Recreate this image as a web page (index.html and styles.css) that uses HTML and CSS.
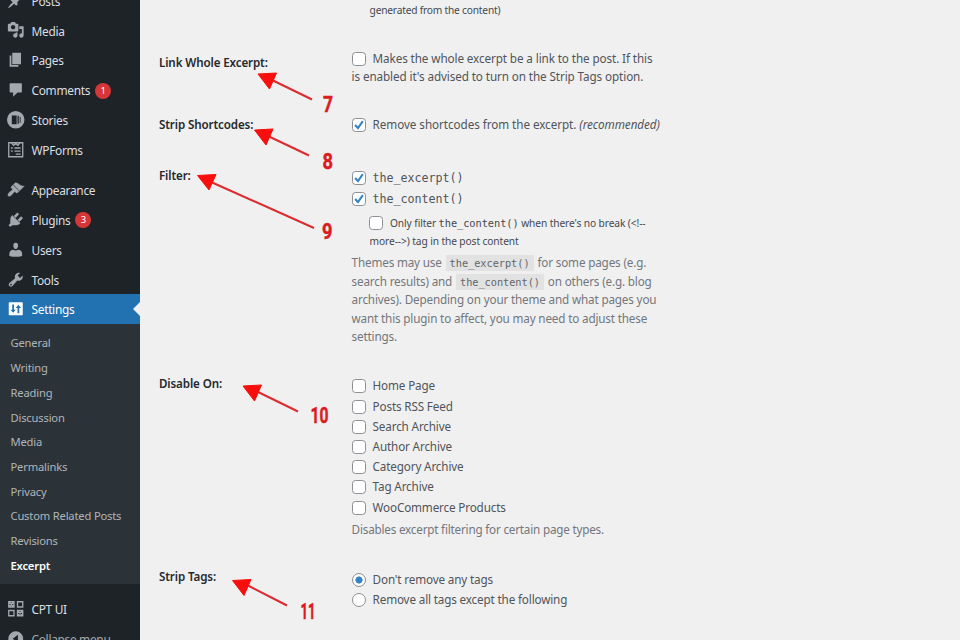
FILE: index.html
```html
<!DOCTYPE html>
<html lang="en">
<head>
<meta charset="utf-8">
<title>Excerpt Settings</title>
<link rel="stylesheet" href="styles.css">
</head>
<body>
<div class="admin">
  <nav class="sidebar">
    <a class="item"><svg viewBox="0 0 20 20"><path d="M10.44 3.02l1.82-1.82 6.36 6.35-1.83 1.82c-1.05-.68-2.48-.57-3.41.36l-.75.75c-.92.93-1.04 2.35-.35 3.41l-1.83 1.82-2.41-2.41-2.8 2.79c-.42.42-3.38 2.71-3.8 2.29s1.86-3.39 2.28-3.81l2.79-2.79L4.1 9.36l1.83-1.82c1.05.69 2.48.57 3.4-.36l.75-.75c.93-.92 1.05-2.35.36-3.41z"/></svg><span>Posts</span></a>
    <a class="item"><svg viewBox="0 0 20 20"><path fill-rule="evenodd" d="M13 11V4c0-.55-.45-1-1-1h-1.67L9 1H5L3.67 3H2c-.55 0-1 .45-1 1v7c0 .55.45 1 1 1h10c.55 0 1-.45 1-1zM7 4.500c1.380 0 2.500 1.120 2.500 2.500S8.380 9.500 7 9.500 4.500 8.380 4.500 7 5.620 4.500 7 4.500zM14 6h5v10.500c0 1.380-1.120 2.500-2.500 2.500S14 17.880 14 16.500s1.120-2.500 2.500-2.500c.17 0 .34.02.5.05V9h-3V6zm-4 8.050V13h2v3.500c0 1.380-1.120 2.500-2.500 2.500S7 17.880 7 16.500 8.120 14 9.500 14c.17 0 .34.02.5.05z"/></svg><span>Media</span></a>
    <a class="item"><svg viewBox="0 0 20 20"><path d="M6 15V2h10v13H6zm-1 1h8v2H3V5h2v11z"/></svg><span>Pages</span></a>
    <a class="item"><svg viewBox="0 0 20 20"><path d="M4 2.500h12a1 1 0 0 1 1 1V12a1 1 0 0 1-1 1h-4l-5 5v-5H4a1 1 0 0 1-1-1V3.500a1 1 0 0 1 1-1z"/></svg><span>Comments</span><b class="count">1</b></a>
    <a class="item"><svg viewBox="0 0 20 20"><path fill-rule="evenodd" d="M10 0a10 10 0 1 0 0 20 10 10 0 0 0 0-20zM5.500 5H11v10H5.500zM12 5.500h1.500v9H12zM14.500 6.500h1v7h-1z"/></svg><span>Stories</span></a>
    <a class="item"><svg viewBox="0 0 20 20"><path fill="none" stroke="currentColor" stroke-width="1.500" d="M2 2h16v16H2zM5.500 2.500l2 2.500L10 3l2.500 2 2-2.500M4.500 8h2M8.500 8h7M4.500 11.500h2M8.500 11.500h7M10 15h5.500"/></svg><span>WPForms</span></a>
    <div class="separator"></div>
    <a class="item"><svg viewBox="0 0 20 20"><path stroke="currentColor" stroke-width=".5" d="M14.480 11.060L7.410 3.990l1.500-1.500c.5-.56 2.300-.47 3.510.32 1.210.8 1.430 1.280 2.910 2.100 1.180.64 2.450 1.260 4.450.85zm-.71.71L6.700 4.700 4.930 6.470c-.39.39-.39 1.020 0 1.410l1.060 1.060c.39.39.39 1.030 0 1.420-.6.6-1.430 1.110-2.210 1.690-.35.26-.7.53-1.010.84C1.430 14.230.4 16.080 1.400 17.070c.99 1 2.840-.03 4.180-1.360.31-.31.58-.66.85-1.020.57-.78 1.080-1.610 1.690-2.210.39-.39 1.020-.39 1.410 0l1.060 1.060c.39.39 1.020.39 1.410 0z"/></svg><span>Appearance</span></a>
    <a class="item"><svg viewBox="0 0 20 20"><path stroke="currentColor" stroke-width=".5" d="M13.110 4.360L9.870 7.600 8 5.730l3.240-3.240c.35-.34 1.050-.2 1.560.32.52.51.66 1.210.31 1.550zm-8 1.770l.91-1.120 9.010 9.010-1.190.84c-.71.71-2.630 1.160-3.820 1.160H6.140L4.900 17.260c-.59.59-1.540.59-2.120 0-.59-.58-.59-1.530 0-2.120l1.240-1.240v-3.880c0-1.130.4-3.190 1.090-3.890zm7.260 3.970l3.240-3.240c.34-.35 1.040-.21 1.550.31.52.51.66 1.210.31 1.550l-3.240 3.250z"/></svg><span>Plugins</span><b class="count">3</b></a>
    <a class="item"><svg viewBox="0 0 20 20"><path d="M10 9.250c-2.270 0-2.730-3.440-2.730-3.440C7 4.020 7.820 2 9.970 2c2.160 0 2.980 2.020 2.710 3.810 0 0-.41 3.440-2.680 3.440zM7.200 10Q10 11.600 12.800 10c2.800 0 4.500 2.300 4.500 4.500V17c-2.300.8-4.700 1.100-7.300 1.100S5 17.800 2.700 17v-2.500c0-2.200 1.700-4.500 4.500-4.500z"/></svg><span>Users</span></a>
    <a class="item"><svg viewBox="0 0 20 20"><path fill-rule="evenodd" d="M16.680 9.770c-1.340 1.340-3.300 1.670-4.950.99l-5.410 6.520c-.99.99-2.590.99-3.580 0s-.99-2.590 0-3.570l6.520-5.420c-.68-1.650-.35-3.610.99-4.950 1.280-1.280 3.120-1.620 4.720-1.060l-2.890 2.890 2.820 2.820 2.860-2.870c.53 1.580.18 3.390-1.080 4.650zM3.810 16.210c.4.39 1.040.39 1.430 0 .4-.4.4-1.040 0-1.430-.39-.4-1.030-.4-1.430 0-.39.39-.39 1.030 0 1.430z"/></svg><span>Tools</span></a>
    <a class="item current"><svg viewBox="0 0 20 20"><path fill-rule="evenodd" d="M3 2.500h14a1 1 0 0 1 1 1v13a1 1 0 0 1-1 1H3a1 1 0 0 1-1-1v-13a1 1 0 0 1 1-1zM6 5v6H4l3 3.500 3-3.500H8V5zM12 15V9h-2l3-3.500L16 9h-2v6z"/></svg><span>Settings</span></a>
    <div class="submenu">
      <a>General</a><a>Writing</a><a>Reading</a><a>Discussion</a><a>Media</a><a>Permalinks</a><a>Privacy</a><a>Custom Related Posts</a><a>Revisions</a><a class="active">Excerpt</a>
    </div>
    <a class="item"><svg viewBox="0 0 20 20"><path fill="none" stroke="currentColor" stroke-width="1.500" d="M2 2h6v6H2zM12 2h6v6h-6zM2 12h6v6H2zM12 12h6v6h-6zM2.500 2.500l5 5M7.500 2.500l-5 5M12.500 12.500l5 5M17.500 12.500l-5 5"/></svg><span>CPT UI</span></a>
    <a class="item collapse"><svg viewBox="0 0 20 20"><path fill-rule="evenodd" d="M10 1.500a8.500 8.500 0 1 0 0 17 8.500 8.500 0 0 0 0-17zM12.500 5.500v9L6.500 10z"/></svg><span>Collapse menu</span></a>
  </nav>
  <main class="form">
    <section class="row top"><h3></h3><div class="field"><p class="small">generated from the content)</p></div></section>
    <section class="row link"><h3>Link Whole Excerpt:</h3><div class="field"><label><i class="box"></i>Makes the whole excerpt be a link to the post. If this<br>is enabled it's advised to turn on the Strip Tags option.</label></div></section>
    <section class="row short"><h3>Strip Shortcodes:</h3><div class="field"><label><i class="box"><svg viewBox="0 0 14 14"><path d="M2.500 7l3.300 3.700L11.500 2.500"/></svg></i>Remove shortcodes from the excerpt. <em>(recommended)</em></label></div></section>
    <section class="row filter"><h3>Filter:</h3><div class="field">
      <label class="mono"><i class="box"><svg viewBox="0 0 14 14"><path d="M2.500 7l3.300 3.700L11.500 2.500"/></svg></i>the_excerpt()</label>
      <label class="mono"><i class="box"><svg viewBox="0 0 14 14"><path d="M2.500 7l3.300 3.700L11.500 2.500"/></svg></i>the_content()</label>
      <label class="small sub"><i class="box"></i>Only filter <tt>the_content()</tt> when there's no break (&lt;!--<br>more--&gt;) tag in the post content</label>
      <p class="hint">Themes may use <code>the_excerpt()</code> for some pages (e.g.<br>search results) and <code>the_content()</code> on others (e.g. blog<br>archives). Depending on your theme and what pages you<br>want this plugin to affect, you may need to adjust these<br>settings.</p>
    </div></section>
    <section class="row disable"><h3>Disable On:</h3><div class="field list">
      <label><i class="box"></i>Home Page</label>
      <label><i class="box"></i>Posts RSS Feed</label>
      <label><i class="box"></i>Search Archive</label>
      <label><i class="box"></i>Author Archive</label>
      <label><i class="box"></i>Category Archive</label>
      <label><i class="box"></i>Tag Archive</label>
      <label><i class="box"></i>WooCommerce Products</label>
      <p class="hint">Disables excerpt filtering for certain page types.</p>
    </div></section>
    <section class="row strip"><h3>Strip Tags:</h3><div class="field list">
      <label><i class="box radio on"></i>Don't remove any tags</label>
      <label><i class="box radio"></i>Remove all tags except the following</label>
    </div></section>
  </main>
  <svg class="notes" viewBox="0 0 960 640">
    <g class="arrows">
      <path class="line" d="M272 80L312 99.500M268 136L309 155.500M211 182L314 228M256 391L298 411.500M247 585L287 605.500"/>
      <path class="head" d="M258 74l18.500-1-7 16zM254.500 130l18.500-1-7 16zM197.500 175.500l18.500-1-7 15.500zM243 386l18.500-1-7 16zM232.500 580.500l18.500-1-7 16z"/>
    </g>
    <g class="digits">
      <text x="323" y="112" textLength="10" lengthAdjust="spacingAndGlyphs">7</text>
      <text x="322.500" y="169" textLength="10.500" lengthAdjust="spacingAndGlyphs">8</text>
      <text x="322" y="238.500" textLength="10.500" lengthAdjust="spacingAndGlyphs">9</text>
      <text x="310.500" y="422.500" textLength="18" lengthAdjust="spacingAndGlyphs">10</text>
      <text x="300.500" y="619" textLength="15" lengthAdjust="spacingAndGlyphs">11</text>
    </g>
  </svg>
</div>
</body>
</html>
```
FILE: styles.css
```css
* { box-sizing: border-box; }
body { margin: 0; background: #f0f0f0; font: 11.7px/18px "Noto Sans", sans-serif; letter-spacing: -.1px; color: #50555a; }
.admin { position: relative; display: flex; width: 960px; height: 640px; overflow: hidden; }
.sidebar { width: 140px; flex: none; background: #1e2328; margin-top: -14.600px; height: 655px; overflow: hidden; }
.item { display: flex; align-items: center; height: 29.9px; padding-left: 7px; color: #dcdee0; font-size: 11.900px; letter-spacing: -.3px; position: relative; }
.item svg { width: 17.500px; height: 17.500px; margin-right: 7px; fill: currentColor; color: #a2a8ad; flex: none; }
.item span { padding-top: .6px; }
.count { width: 16px; height: 16px; margin: 1px 0 0 5px; border-radius: 50%; background: #d63638; color: #fff; font-size: 9.500px; line-height: 16px; font-weight: 400; text-align: center; }
.separator { height: 9.900px; }
.current { background: #2271b1; color: #fff; }
.item.current svg { color: #fff; }
.current::after { content: ""; position: absolute; right: 0; top: 8px; border: 7px solid transparent; border-left: 0; border-right-color: #f0f0f0; }
.submenu { background: #2c3338; padding-top: 7.400px; height: 260px; margin-bottom: 9.700px; font-size: 11.200px; letter-spacing: -.18px; }
.submenu a { display: block; height: 24.700px; line-height: 24.700px; padding-left: 10.500px; color: #b0b5b9; }
.submenu .active { color: #fff; font-weight: 600; }
.collapse { color: #a2a8ad; }
.form { padding-left: 19px; width: 540px; }
.row { display: grid; grid-template-columns: 192.600px 1fr; }
h3 { margin: .4px 0 0; font-size: 11.600px; line-height: 18px; font-weight: 600; color: #24292e; letter-spacing: -.12px; }
p { margin: 0; }
.field { white-space: nowrap; }
label { display: block; }
.small { font-size: 10.200px; padding-left: 18px; color: #44494e; letter-spacing: -.1px; }
.top .small { letter-spacing: -.2px; }
.box { display: inline-block; width: 14px; height: 14px; margin-right: 7px; vertical-align: -3px; border: 1px solid #8c8f94; border-radius: 3.500px; background: #fff; }
.box svg { display: block; width: 12px; height: 12px; fill: none; stroke: #3582c4; stroke-width: 2.400; }
.radio { border-radius: 50%; }
.on { background: radial-gradient(circle, #3582c4 3.200px, #fff 3.900px); }
.top { height: 50px; padding-top: 1px; }
.link { height: 66px; }
.link h3 { padding-top: 4px; }
.link .field, .short .field { margin-top: -1px; }
.short { height: 51px; }
.short .field { letter-spacing: -.06px; }
.filter { height: 209px; }
.mono { font: 11.700px/21px "DejaVu Sans Mono", monospace; letter-spacing: -.05px; }
.filter .field { padding-top: 1px; }
.sub { margin-top: 4px; line-height: 18px; }
.sub .box { margin-left: -.6px; }
.sub tt { font: 10.300px/10px "DejaVu Sans Mono", monospace; letter-spacing: -.04px; }
.hint { color: #73777c; line-height: 18.500px; padding-top: 3px; letter-spacing: -.16px; }
code { font: 10.300px/14px "DejaVu Sans Mono", monospace; background: #e2e2e3; padding: 2px 4px; margin: 0 1px; color: #62666a; letter-spacing: -.05px; }
.disable { height: 192px; }
.disable h3 { margin-top: -.8px; }
.list { margin-top: -.6px; letter-spacing: -.15px; }
.list .hint { letter-spacing: -.2px; }
.list label { height: 20.200px; line-height: 20.200px; }
.strip .list { margin-top: .6px; }
.notes { position: absolute; left: 0; top: 0; width: 960px; height: 640px; }
.line { fill: none; stroke: #dc2b2e; stroke-width: 2; }
.head { fill: #f80e0c; stroke: #f80e0c; stroke-width: 1; stroke-linejoin: round; }
.digits { font: 700 22.500px Roboto, sans-serif; letter-spacing: 0; fill: #dc1b1e; stroke: #dc1b1e; stroke-width: .5; }
```
